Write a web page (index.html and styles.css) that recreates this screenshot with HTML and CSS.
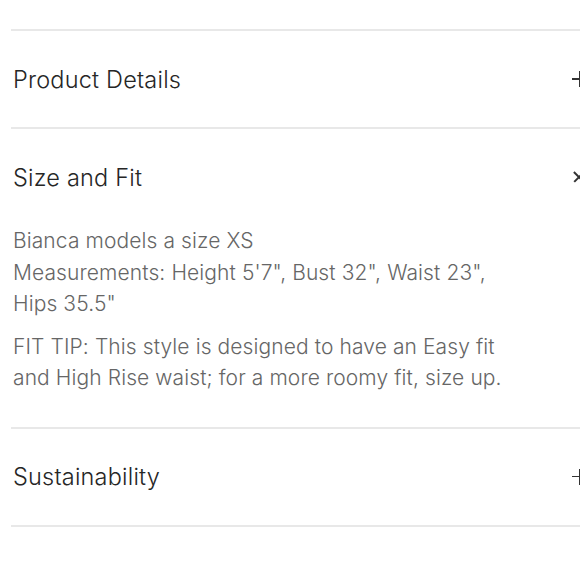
FILE: index.html
```html
<!DOCTYPE html>
<html>
<head>
<meta charset="utf-8">
<link rel="stylesheet" href="styles.css">
</head>
<body>
<div class="accordion">
  <div class="item">
    <div class="head"><span class="title">Product Details</span><span class="icon plus"></span></div>
  </div>
  <div class="item">
    <div class="head"><span class="title">Size and Fit</span><span class="icon close"></span></div>
    <div class="body">
      <p>Bianca models a size XS<br>Measurements: Height 5'7", Bust 32", Waist 23", Hips 35.5"</p>
      <p>FIT TIP: This style is designed to have an Easy fit and High Rise waist; for a more roomy fit, size up.</p>
    </div>
  </div>
  <div class="item">
    <div class="head"><span class="title">Sustainability</span><span class="icon plus"></span></div>
  </div>
  <div class="item last"></div>
</div>
</body>
</html>
```

FILE: styles.css
```css
html, body {
  margin: 0;
  padding: 0;
  background: #fff;
  overflow: hidden;
}
body {
  font-family: "Inter", "Liberation Sans", sans-serif;
  width: 580px;
  height: 580px;
}
.accordion {
  padding-top: 29px;
  margin-left: 11px;
  width: 590px;
}
.item {
  border-top: 2px solid #e8e8e8;
}
.head {
  height: 96px;
  display: flex;
  align-items: center;
  justify-content: space-between;
  padding-left: 2px;
}
.title {
  font-size: 23.5px;
  font-weight: 350;
  letter-spacing: 0.2px;
  color: #262626;
}
.icon {
  position: relative;
  width: 16px;
  height: 16px;
  margin-right: 13px;
}
.plus::before, .plus::after,
.close::before, .close::after {
  content: "";
  position: absolute;
  background: #333;
}
.plus::before {
  left: 0; right: 0; top: 7px; height: 1.5px;
}
.plus::after {
  top: 0; bottom: 0; left: 7px; width: 1.5px;
}
.close::before, .close::after {
  left: 0; right: 0; top: 7px; height: 1.5px;
  width: 14px;
}
.close::before { transform: rotate(45deg); }
.close::after { transform: rotate(-45deg); }
.body {
  padding: 0 0 33px 2px;
  width: 515px;
}
.body p {
  margin: 0;
  font-size: 21px;
  font-weight: 300;
  letter-spacing: 0.1px;
  line-height: 31.5px;
  color: #666;
}
.body p + p {
  margin-top: 11px;
}
```
